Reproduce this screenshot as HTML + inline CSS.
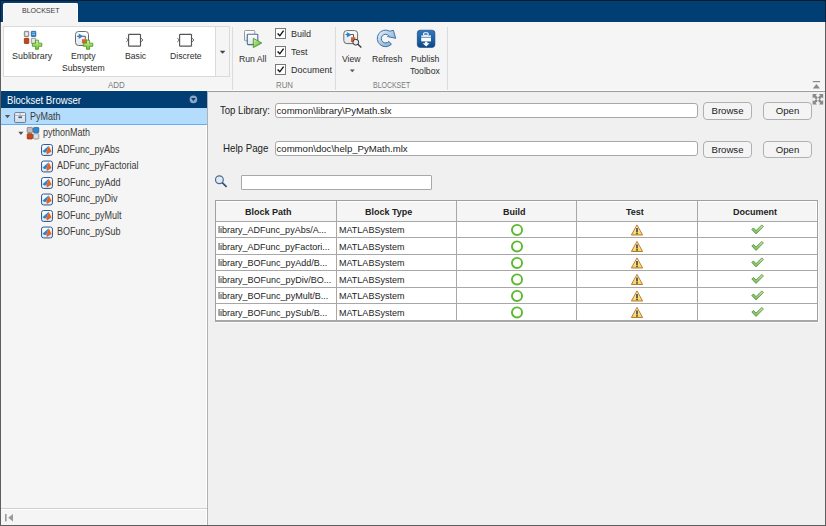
<!DOCTYPE html>
<html><head><meta charset="utf-8">
<style>
*{margin:0;padding:0;box-sizing:border-box}
html,body{width:826px;height:526px;overflow:hidden;background:#f0f0f0;font-family:"Liberation Sans",sans-serif;color:#222}
.a{position:absolute}
.t{position:absolute;white-space:nowrap;line-height:1}
#frame{position:absolute;left:0;top:0;width:826px;height:526px;border:1px solid #5e5e5e;border-top-color:#0b1a2a;pointer-events:none;z-index:50}
#topbar{left:0;top:0;width:826px;height:22px;background:#003e74}
#tab{left:3px;top:3px;width:75px;height:20px;background:#f5f5f5;border:1px solid #fff;border-bottom:none;border-radius:2px 2px 0 0}
#ribbon{left:0;top:22px;width:826px;height:70px;background:#f5f5f5;border-bottom:1px solid #9c9c9c}
.rt{font-size:9.6px;color:#2e2e2e;transform:scaleX(0.9);transform-origin:0 0}
.gl{font-size:8.9px;color:#7c7c7c;transform-origin:0 0}
.sep{position:absolute;width:1px;background:#dcdcdc}
#addbox{left:3px;top:26px;width:227px;height:51px;background:#fff;border:1px solid #dadada}
.cb{position:absolute;width:11px;height:11px;border:1px solid #7a7a7a;background:#fff}
#browser{left:0;top:91px;width:208px;height:435px;background:#f5f5f5;border-right:1px solid #b0b0b0;box-shadow:inset -1px 0 0 #fff}
#bhead{left:0;top:91px;width:207px;height:17px;background:#003e74}
#selrow{left:1px;top:108px;width:206px;height:17px;background:#b3dcfd;border-bottom:1px solid #62aef0}
.tr{font-size:10px;color:#3a3a3a;transform:scaleX(0.9);transform-origin:0 0}
.fld{position:absolute;background:#fff;border:1px solid #a8a8a8;border-radius:3px}
.btn{position:absolute;background:#f4f4f4;border:1px solid #b0b0b0;border-radius:4px;font-size:9.6px;color:#222;text-align:center}
#tbl{left:215px;top:200px;width:603px;height:122px;background:#fff;border:1px solid #a0a0a0;border-bottom:2px solid #a8a8a8;box-shadow:1px 1px 0 #fafafa}
.hl{position:absolute;height:1px;background:#a8a8a8}
.vl{position:absolute;width:1px;background:#a8a8a8}
.th{font-size:9px;font-weight:bold;color:#222}
.td{font-size:9.8px;color:#222;transform:scaleX(0.92);transform-origin:0 0}
</style></head><body>
<div id="frame"></div>
<div class="a" style="left:0;top:0;width:1px;height:22px;background:#0b2038;z-index:51"></div>
<div class="a" style="left:825px;top:0;width:1px;height:22px;background:#0b2038;z-index:51"></div>
<div class="a" id="topbar"></div>
<div class="a" id="tab"></div>
<div class="t" style="left:21.8px;top:7px;font-size:8px;color:#3a3a3a;transform:scaleX(0.88);transform-origin:0 0">BLOCKSET</div>

<div class="a" id="ribbon"></div>
<div class="a" style="left:0;top:90px;width:826px;height:1px;background:#fcfcfc"></div>
<div class="a" id="addbox"></div>
<div class="a" style="left:216px;top:27px;width:13px;height:49px;background:#f5f5f5"></div><div class="sep" style="left:215px;top:27px;height:49px;background:#dadada"></div>
<div class="sep" style="left:232px;top:27px;height:63px"></div>
<div class="sep" style="left:335px;top:27px;height:63px"></div>
<div class="sep" style="left:447px;top:27px;height:63px"></div>

<!-- ADD group labels -->
<div class="t rt" style="left:12.3px;top:51.45px;transform:scaleX(0.93)">Sublibrary</div>
<div class="t rt" style="left:71.2px;top:51.45px">Empty</div>
<div class="t rt" style="left:62px;top:63.45px">Subsystem</div>
<div class="t rt" style="left:125px;top:51.45px">Basic</div>
<div class="t rt" style="left:170px;top:51.45px">Discrete</div>
<div class="t gl" style="left:108.1px;top:80.6px;transform:scaleX(0.9)">ADD</div>
<div class="t rt" style="left:239px;top:53.95px">Run All</div>
<div class="t rt" style="left:291.2px;top:29.45px;transform:scaleX(0.94)">Build</div>
<div class="t rt" style="left:291.2px;top:47.45px;transform:scaleX(0.94)">Test</div>
<div class="t rt" style="left:291.2px;top:65.45px;transform:scaleX(0.94)">Document</div>
<div class="cb" style="left:275px;top:28px"></div>
<div class="cb" style="left:275px;top:46px"></div>
<div class="cb" style="left:275px;top:64px"></div>
<div class="t gl" style="left:275.5px;top:80.6px;transform:scaleX(0.88)">RUN</div>
<div class="t rt" style="left:342px;top:54.45px">View</div>
<div class="t rt" style="left:372px;top:54.45px">Refresh</div>
<div class="t rt" style="left:411px;top:54.45px">Publish</div>
<div class="t rt" style="left:410px;top:66.45px">Toolbox</div>
<div class="t gl" style="left:373.2px;top:80.6px;transform:scaleX(0.785)">BLOCKSET</div>

<!-- browser -->
<div class="a" id="browser"></div>
<div class="a" id="bhead"></div>
<div class="t" style="left:6.8px;top:95.3px;font-size:10.5px;transform:scaleX(0.912);transform-origin:0 0;color:#fff">Blockset Browser</div>
<div class="a" id="selrow"></div>
<div class="t tr" style="left:30px;top:111.6px">PyMath</div>
<div class="t tr" style="left:43px;top:128.1px">pythonMath</div>
<div class="t tr" style="left:57px;top:144.9px">ADFunc_pyAbs</div>
<div class="t tr" style="left:57px;top:161.4px">ADFunc_pyFactorial</div>
<div class="t tr" style="left:57px;top:177.9px">BOFunc_pyAdd</div>
<div class="t tr" style="left:57px;top:194.4px">BOFunc_pyDiv</div>
<div class="t tr" style="left:57px;top:210.9px">BOFunc_pyMult</div>
<div class="t tr" style="left:57px;top:227.4px">BOFunc_pySub</div>
<div class="hl" style="left:1px;top:508px;width:206px;background:#d0d0d0"></div>
<div class="a" style="left:1px;top:509px;width:206px;height:1px;background:#fff"></div>

<!-- right panel -->
<div class="t" style="left:220px;top:104.8px;font-size:11px;color:#222;transform:scaleX(0.87);transform-origin:0 0">Top Library:</div>
<div class="fld" style="left:275px;top:103px;width:423px;height:15px"></div>
<div class="t" style="left:276.5px;top:105.5px;font-size:9.6px;color:#222">common\library\PyMath.slx</div>
<div class="btn" style="left:703px;top:102px;width:49px;height:18px;line-height:16px">Browse</div>
<div class="btn" style="left:763px;top:102px;width:49px;height:18px;line-height:16px">Open</div>

<div class="t" style="left:222.7px;top:143px;font-size:11px;color:#222;transform:scaleX(0.884);transform-origin:0 0">Help Page</div>
<div class="fld" style="left:275px;top:141px;width:423px;height:15px"></div>
<div class="t" style="left:276.5px;top:143.5px;font-size:9.6px;color:#222">common\doc\help_PyMath.mlx</div>
<div class="btn" style="left:703px;top:141px;width:49px;height:17px;line-height:15px">Browse</div>
<div class="btn" style="left:763px;top:141px;width:49px;height:17px;line-height:15px">Open</div>

<div class="fld" style="left:241px;top:175px;width:191px;height:15px;border-radius:1px"></div>

<!-- table -->
<div class="a" id="tbl"></div>
<div class="a" style="left:216px;top:202px;width:600px;height:19px;background:#f5f5f5"></div>
<div class="hl" style="left:216px;top:221px;width:601px"></div>
<div class="hl" style="left:216px;top:237px;width:601px"></div>
<div class="hl" style="left:216px;top:254px;width:601px"></div>
<div class="hl" style="left:216px;top:270px;width:601px"></div>
<div class="hl" style="left:216px;top:287px;width:601px"></div>
<div class="hl" style="left:216px;top:303px;width:601px"></div>
<div class="vl" style="left:336px;top:201px;height:120px"></div>
<div class="vl" style="left:456px;top:201px;height:120px"></div>
<div class="vl" style="left:576px;top:201px;height:120px"></div>
<div class="vl" style="left:697px;top:201px;height:120px"></div>

<div class="t th" style="left:245px;top:207.5px">Block Path</div>
<div class="t th" style="left:365px;top:207.5px">Block Type</div>
<div class="t th" style="left:503px;top:207.5px">Build</div>
<div class="t th" style="left:626px;top:207.5px">Test</div>
<div class="t th" style="left:733px;top:207.5px">Document</div>


<svg class="a" style="left:0;top:0;z-index:10" width="826" height="526" viewBox="0 0 826 526">
<defs>
<linearGradient id="gplus" x1="0" y1="0" x2="0" y2="1"><stop offset="0" stop-color="#d8f5a0"/><stop offset="1" stop-color="#6cbf2a"/></linearGradient>
<linearGradient id="gplay" x1="0" y1="0" x2="1" y2="1"><stop offset="0" stop-color="#d6f7a8"/><stop offset="1" stop-color="#4ea82a"/></linearGradient>
<linearGradient id="gbox" x1="0" y1="0" x2="0" y2="1"><stop offset="0" stop-color="#ffffff"/><stop offset="1" stop-color="#dfe6ee"/></linearGradient>
<linearGradient id="gref" x1="0" y1="0" x2="1" y2="1"><stop offset="0" stop-color="#e8f2fb"/><stop offset="1" stop-color="#6fa1d2"/></linearGradient>
<linearGradient id="gpub" x1="0" y1="0" x2="0" y2="1"><stop offset="0" stop-color="#2f78c0"/><stop offset="1" stop-color="#0d4a8a"/></linearGradient>
<linearGradient id="gchk" x1="0" y1="1" x2="1" y2="0"><stop offset="0" stop-color="#6cb848"/><stop offset="1" stop-color="#c8f0a0"/></linearGradient>
<linearGradient id="gwarn" x1="0" y1="0" x2="0" y2="1"><stop offset="0" stop-color="#fff8c8"/><stop offset="1" stop-color="#f0d84a"/></linearGradient>
<g id="ml">
  <rect x="0.55" y="0.55" width="10.9" height="10.9" rx="2" fill="url(#gml)" stroke="#2a5690" stroke-width="1"/>
  <path d="M1.5 7.2 L4 5 L7.8 1.8 L6.6 5 L5.2 8.3 L3.4 8.4 Z" fill="#2f7fcc"/>
  <path d="M7.8 1.8 L9 4.2 L10.5 7.6 L9 8.4 L7.4 9.6 L6 10.5 L5.2 8.3 L6.6 5 Z" fill="#de6526"/>
</g>
<linearGradient id="gml" x1="0" y1="0" x2="0" y2="1"><stop offset="0" stop-color="#ffffff"/><stop offset="1" stop-color="#dce8f4"/></linearGradient>
<g id="circ"><circle cx="6" cy="6" r="5.05" fill="none" stroke="#5cb92e" stroke-width="1.9"/></g>
<g id="warn">
  <path d="M6 0.5 L11.6 10.6 L0.4 10.6 Z" fill="url(#gwarn)" stroke="#b86a30" stroke-width="0.9" stroke-linejoin="round"/>
  <rect x="5.2" y="3.6" width="1.6" height="4" fill="#404040"/>
  <rect x="5.2" y="8.2" width="1.6" height="1.6" fill="#404040"/>
</g>
<g id="chk">
  <path d="M0.3 4.9 L1.9 3.3 L4.6 6 L10.3 0.3 L11.9 1.9 L4.6 9.3 Z" fill="url(#gchk)" stroke="#4b7f3b" stroke-width="0.75" stroke-linejoin="round"/>
</g>
</defs>

<!-- Sublibrary -->
<rect x="24.3" y="31.3" width="4.5" height="5.2" rx="0.5" fill="#b8b8b8" stroke="#6a6a6a" stroke-width="0.7"/>
<rect x="25.5" y="32.3" width="2.2" height="3.2" fill="#f4f4f4"/>
<rect x="31.3" y="31.3" width="4.5" height="5.2" rx="0.5" fill="#2a86d0" stroke="#15589a" stroke-width="0.7"/>
<path d="M32.2 32.8 H35 M32.2 34.5 H35" stroke="#cfe6fa" stroke-width="0.6"/>
<rect x="24.3" y="38.3" width="4.5" height="5.2" rx="0.5" fill="#c4441a" stroke="#8a2a08" stroke-width="0.7"/>
<rect x="31.3" y="38.3" width="4.5" height="5.2" rx="0.5" fill="#e4e4e4" stroke="#777" stroke-width="0.7"/>
<path d="M35.5 40.2 H38.6 V43.2 H41.8 V46.3 H38.6 V49.3 H35.5 V46.3 H32.4 V43.2 H35.5 Z" fill="url(#gplus)" stroke="#3c8f1e" stroke-width="0.75"/>

<!-- Empty Subsystem -->
<rect x="75.5" y="31.5" width="13" height="14" rx="3" fill="url(#gbox)" stroke="#6a6a6a" stroke-width="1"/>
<path d="M77 36.3 H85.3 V39.5" fill="none" stroke="#333" stroke-width="0.8"/>
<path d="M78.7 33.4 L83.2 36.3 L78.7 39.1 Z" fill="#2f86d0"/>
<rect x="82" y="39.2" width="4.8" height="4" fill="#e0602a"/>
<path d="M86.5 40.2 H89.6 V43.2 H92.8 V46.3 H89.6 V49.3 H86.5 V46.3 H83.4 V43.2 H86.5 Z" fill="url(#gplus)" stroke="#3c8f1e" stroke-width="0.75"/>

<!-- Basic -->
<rect x="128.6" y="34.3" width="11.9" height="11.8" rx="0.6" fill="#fff" stroke="#555" stroke-width="1.15"/>
<path d="M126.3 38.2 L128.3 40 L126.3 41.8" fill="none" stroke="#555" stroke-width="0.9"/>
<path d="M140.8 37.9 L142.9 40 L140.8 42.1" fill="none" stroke="#555" stroke-width="0.9"/>
<!-- Discrete -->
<rect x="179.6" y="34.3" width="11.9" height="11.8" rx="0.6" fill="#fff" stroke="#555" stroke-width="1.15"/>
<path d="M177.3 38.2 L179.3 40 L177.3 41.8" fill="none" stroke="#555" stroke-width="0.9"/>
<path d="M191.8 37.9 L193.9 40 L191.8 42.1" fill="none" stroke="#555" stroke-width="0.9"/>
<!-- dropdown arrow -->
<path d="M219.8 50.8 H225.4 L222.6 53.8 Z" fill="#444"/>

<!-- Run All -->
<rect x="244.5" y="30.5" width="10.3" height="10.3" rx="0.8" fill="url(#gbox)" stroke="#9a9a9a" stroke-width="1"/>
<rect x="247.3" y="34.3" width="10.5" height="10.3" rx="0.8" fill="url(#gbox)" stroke="#4e6f96" stroke-width="1.1"/>
<path d="M253.3 38.3 L261.8 43 L253.3 47.6 Z" fill="url(#gplay)" stroke="#3c8a22" stroke-width="0.8" stroke-linejoin="round"/>

<!-- checkmarks -->
<path d="M277.6 33.6 L279.8 35.8 L283.6 30.6" fill="none" stroke="#111" stroke-width="1.4"/>
<path d="M277.6 51.6 L279.8 53.8 L283.6 48.6" fill="none" stroke="#111" stroke-width="1.4"/>
<path d="M277.6 69.6 L279.8 71.8 L283.6 66.6" fill="none" stroke="#111" stroke-width="1.4"/>

<!-- View -->
<rect x="343.8" y="30.6" width="13.8" height="13" rx="3" fill="url(#gbox)" stroke="#6a6a6a" stroke-width="1"/>
<path d="M345.5 34.5 H353.5 V38" fill="none" stroke="#333" stroke-width="0.8"/>
<path d="M346.8 32 L351.6 34.7 L346.8 37.5 Z" fill="#2f86d0"/>
<rect x="351" y="37.2" width="4.3" height="4.8" fill="#e0602a"/>
<circle cx="355.8" cy="42.2" r="2.9" fill="#e6ebef" stroke="#333" stroke-width="1"/>
<path d="M357.9 44.3 L361.3 47.4" stroke="#333" stroke-width="1.3"/>
<path d="M349.8 69.6 H354.8 L352.3 72.3 Z" fill="#555"/>

<!-- Refresh -->
<path d="M391.4 44.3 A8.3 8.3 0 1 1 389.65 31.2 L393.4 30.3 L395.7 38.3 L387.6 36.6 L388.64 35.56 A4.3 4.3 0 1 0 388.9 41.36 Z" fill="url(#gref)" stroke="#35679a" stroke-width="0.9" stroke-linejoin="round"/>

<!-- Publish -->
<rect x="417.3" y="30.2" width="17.6" height="17.2" rx="2.8" fill="url(#gpub)" stroke="#0a3d75" stroke-width="0.6"/>
<rect x="423.6" y="32.8" width="4.6" height="2.6" rx="1" fill="none" stroke="#fff" stroke-width="1.1"/>
<rect x="421.2" y="35.4" width="9.8" height="2" fill="#dfe9f3"/>
<rect x="421.2" y="37.9" width="9.8" height="3.5" fill="#fff"/>
<path d="M424.9 41.8 H427.4 V43.3 H429.7 L426.15 46.5 L422.6 43.3 H424.9 Z" fill="#fff"/>

<!-- ribbon collapse -->
<rect x="812.8" y="81" width="7.2" height="1.2" fill="#8a8a8a"/>
<path d="M812.8 88.4 L816.4 84 L820 88.4 Z" fill="#8a8a8a"/>

<!-- Browser header icon -->
<circle cx="193.4" cy="99.4" r="3.8" fill="#8ba7c7"/>
<path d="M191.2 97.9 H195.6 L193.4 101.2 Z" fill="#003e74"/>

<!-- tree -->
<path d="M4.9 115 H10.1 L7.5 118.2 Z" fill="#555"/>
<rect x="14.6" y="112.6" width="11" height="10" rx="1" fill="url(#gpy)" stroke="#56687a" stroke-width="0.85"/>
<linearGradient id="gpy" x1="0" y1="0" x2="0" y2="1"><stop offset="0" stop-color="#f8fbfe"/><stop offset="1" stop-color="#c9d9ea"/></linearGradient>
<path d="M14.6 115.4 H25.6 M20.1 112.6 V115.4" stroke="#8a9aaa" stroke-width="0.7"/>
<rect x="18.4" y="116.4" width="3.6" height="1.7" fill="#4a5a6a"/>
<path d="M18.3 131.8 H23.5 L20.9 135 Z" fill="#555"/>
<rect x="27.2" y="127.4" width="5.3" height="5.3" rx="0.8" fill="#bdbdbd" stroke="#6f6f6f" stroke-width="0.7"/>
<rect x="33.5" y="127.4" width="5.3" height="5.3" rx="0.8" fill="#2f88cf" stroke="#1a5a9a" stroke-width="0.7"/>
<rect x="27.2" y="133.7" width="5.3" height="5.3" rx="0.8" fill="#c8481a" stroke="#8a2a08" stroke-width="0.7"/>
<rect x="33.5" y="133.7" width="5.3" height="5.3" rx="0.8" fill="#e0e0e0" stroke="#7a7a7a" stroke-width="0.7"/>
<use href="#ml" x="41" y="144"/>
<use href="#ml" x="41" y="160.5"/>
<use href="#ml" x="41" y="177"/>
<use href="#ml" x="41" y="193.5"/>
<use href="#ml" x="41" y="210"/>
<use href="#ml" x="41" y="226.5"/>

<!-- minimize -->
<rect x="5" y="514" width="1.6" height="7.4" fill="#9a9a9a"/>
<path d="M8.2 517.7 L13 514 V521.4 Z" fill="#9a9a9a"/>

<!-- expand icon -->
<g stroke="#8a8a8a" stroke-width="2.5" stroke-linecap="butt">
<path d="M813.6 95.1 L817 98.5 M822.2 95.1 L818.8 98.5 M813.6 103.3 L817 99.9 M822.2 103.3 L818.8 99.9"/>
</g>
<g fill="#8a8a8a">
<path d="M812.6 94 H817 L812.6 98.4 Z"/><path d="M823.2 94 V98.4 L818.8 94 Z"/><path d="M812.6 104.4 V100 L817 104.4 Z"/><path d="M823.2 104.4 H818.8 L823.2 100 Z"/>
</g>
<!-- search -->
<circle cx="219.4" cy="179.7" r="3.9" fill="#e2e9f0" stroke="#4a6c90" stroke-width="1.2"/>
<path d="M222.2 182.6 L226.6 186.8" stroke="#2b4f7a" stroke-width="1.6"/>

<!-- table icons -->
<use href="#circ" x="511" y="223.9"/><use href="#circ" x="511" y="240.4"/><use href="#circ" x="511" y="256.9"/><use href="#circ" x="511" y="273.4"/><use href="#circ" x="511" y="289.9"/><use href="#circ" x="511" y="306.4"/>
<use href="#warn" x="631" y="224.4"/><use href="#warn" x="631" y="240.9"/><use href="#warn" x="631" y="257.4"/><use href="#warn" x="631" y="273.9"/><use href="#warn" x="631" y="290.4"/><use href="#warn" x="631" y="306.9"/>
<use href="#chk" x="751.5" y="224.6"/><use href="#chk" x="751.5" y="241.1"/><use href="#chk" x="751.5" y="257.6"/><use href="#chk" x="751.5" y="274.1"/><use href="#chk" x="751.5" y="290.6"/><use href="#chk" x="751.5" y="307.1"/>
</svg>

<div class="t td" style="left:218px;top:225.4px">library_ADFunc_pyAbs/A...</div>
<div class="t td" style="left:339px;top:225.4px">MATLABSystem</div>
<div class="t td" style="left:218px;top:241.9px">library_ADFunc_pyFactori...</div>
<div class="t td" style="left:339px;top:241.9px">MATLABSystem</div>
<div class="t td" style="left:218px;top:258.4px">library_BOFunc_pyAdd/B...</div>
<div class="t td" style="left:339px;top:258.4px">MATLABSystem</div>
<div class="t td" style="left:218px;top:274.9px">library_BOFunc_pyDiv/BO...</div>
<div class="t td" style="left:339px;top:274.9px">MATLABSystem</div>
<div class="t td" style="left:218px;top:291.4px">library_BOFunc_pyMult/B...</div>
<div class="t td" style="left:339px;top:291.4px">MATLABSystem</div>
<div class="t td" style="left:218px;top:307.9px">library_BOFunc_pySub/B...</div>
<div class="t td" style="left:339px;top:307.9px">MATLABSystem</div>

</body></html>
